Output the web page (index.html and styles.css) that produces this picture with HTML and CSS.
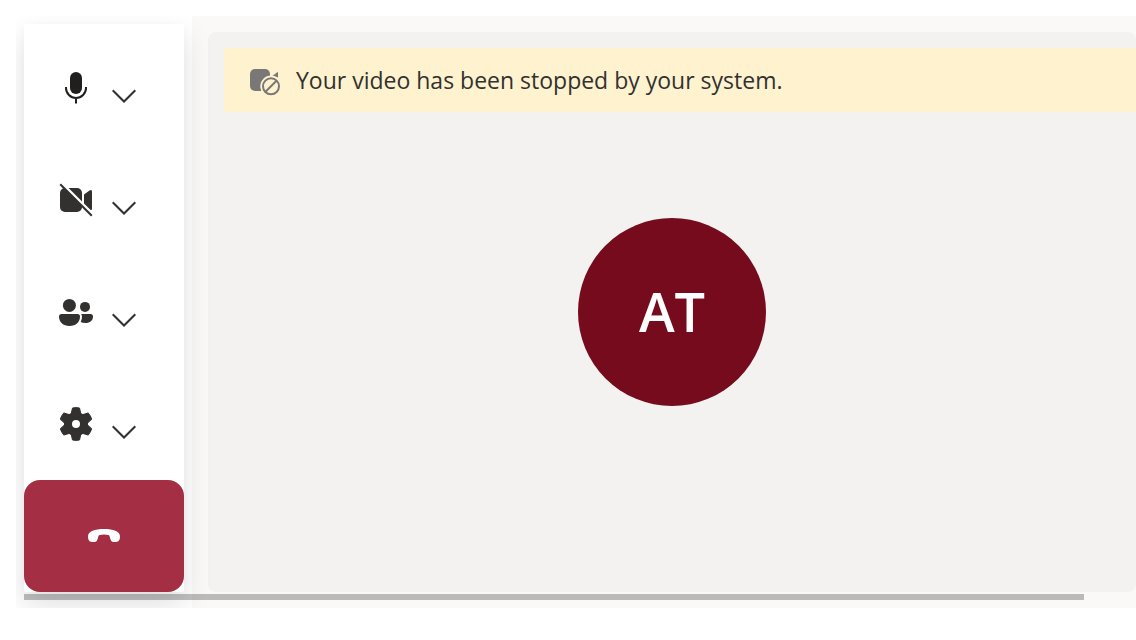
FILE: index.html
```html
<!DOCTYPE html>
<html lang="en">
<head>
<meta charset="utf-8">
<title>Call</title>
<link rel="stylesheet" href="styles.css">
</head>
<body>
<main class="call">
  <div class="controls" role="toolbar" aria-label="Call controls">
    <div class="control">
      <button class="icon-button mic" aria-label="Mute microphone">
        <svg class="icon" viewBox="0 0 40 40"><rect x="14" y="4" width="12" height="22" rx="6"/><path class="line" d="M10 19v1a10 10 0 0 0 20 0v-1M20 30v5.5"/></svg>
      </button>
      <button class="more" aria-label="Microphone options"><svg class="chevron" viewBox="0 0 24 14"><path d="M0.7 1.2 12 12.5 23.3 1.2"/></svg></button>
    </div>
    <div class="control">
      <button class="icon-button" aria-label="Turn camera on">
        <svg class="icon" viewBox="0 0 40 40"><rect x="4" y="8" width="22" height="24" rx="5"/><path d="M28 14.5 33.5 10.6Q36 9 36 11.500V28.500Q36 31 33.500 29.400L28 25.500Z"/><path class="cut" d="M4.500 2 38.500 36"/><path class="line" d="M4.200 4.200 35.800 35.800"/></svg>
      </button>
      <button class="more" aria-label="Camera options"><svg class="chevron" viewBox="0 0 24 14"><path d="M0.7 1.2 12 12.5 23.3 1.2"/></svg></button>
    </div>
    <div class="control">
      <button class="icon-button" aria-label="People">
        <svg class="icon" viewBox="0 0 40 40"><circle cx="13.400" cy="13.400" r="6.500"/><circle cx="29" cy="14.900" r="5"/><path d="M5.500 22h16q2.500 0 2.500 2.500C24 30 20 34 13.500 34S3 30 3 24.500Q3 22 5.500 22Z"/><path d="M25 22h9.500q2.500 0 2.500 2.500C37 28.500 34 31 29.500 31q-3 0-4.800-1 1.300-2.500 1.300-5.500 0-1.500-1-2.500Z"/></svg>
      </button>
      <button class="more" aria-label="People options"><svg class="chevron" viewBox="0 0 24 14"><path d="M0.7 1.2 12 12.5 23.3 1.2"/></svg></button>
    </div>
    <div class="control">
      <button class="icon-button" aria-label="Settings">
        <svg class="icon" viewBox="0 0 40 40"><circle cx="20" cy="20" r="12"/><g class="teeth"><path id="tooth" d="M16.500 4Q20 3.200 23.500 4L25 10.500V29.500L23.500 36Q20 36.800 16.500 36L15 29.500V10.500Z"/><use href="#tooth" transform="rotate(60 20 20)"/><use href="#tooth" transform="rotate(120 20 20)"/></g><circle class="hole" cx="20" cy="20" r="4"/></svg>
      </button>
      <button class="more" aria-label="Settings options"><svg class="chevron" viewBox="0 0 24 14"><path d="M0.7 1.2 12 12.5 23.3 1.2"/></svg></button>
    </div>
    <button class="hang-up" aria-label="Leave call">
      <svg class="icon" viewBox="0 0 40 40"><path d="M4 20.500C4 15 11 13 20 13s16 2 16 7.500c0 3-1 5.300-4 5.500h-2.500c-2-.2-2.800-1.500-3.300-3.500-.5-2.300-.8-3.300-2-3.600q-4.200-1-8.400 0c-1.200.3-1.500 1.300-2 3.600-.5 2-1.300 3.300-3.300 3.500H8c-3-.2-4-2.500-4-5.500Z"/></svg>
    </button>
  </div>
  <section class="stage">
    <div class="tile">
      <div class="banner" role="status">
        <svg class="banner-icon" viewBox="0 0 32 32"><rect x="2" y="5" width="20" height="22" rx="5"/><path d="M24 12.200 30 7.800V13.500Z"/><circle class="halo" cx="23" cy="22.300" r="10.700"/><circle class="ring" cx="23" cy="22.300" r="8"/><path class="ring" d="M17.500 27.800 28.500 16.800"/></svg>
        <span class="message">Your video has been stopped by your system.</span>
      </div>
      <div class="avatar">AT</div>
    </div>
  </section>
  <div class="scroll-thumb"></div>
</main>
</body>
</html>
```
FILE: styles.css
```css
body {
  margin: 16px 0 0 16px;
  background: #fff;
  font-family: "Open Sans", "Noto Sans", sans-serif;
  color: #323130;
}

button {
  padding: 0;
  border: 0;
  background: none;
  color: inherit;
  cursor: pointer;
}

svg {
  display: block;
}

.call {
  position: relative;
  display: flex;
  gap: 8px;
  overflow: hidden;
}

.controls {
  position: relative;
  z-index: 1;
  flex: none;
  width: 160px;
  box-sizing: border-box;
  margin: 8px 0 16px 8px;
  padding-top: 8px;
  background: #fff;
  box-shadow: 0 12px 28px rgba(0, 0, 0, 0.13), 0 2px 8px rgba(0, 0, 0, 0.02);
}

.control {
  display: flex;
  align-items: center;
  gap: 16px;
  height: 112px;
  padding-left: 32px;
}

.icon {
  width: 40px;
  height: 40px;
  fill: currentColor;
}

.mic {
  color: #201f1e;
}

.line {
  fill: none;
  stroke: currentColor;
  stroke-width: 2;
}

.cut {
  stroke: #fff;
  stroke-width: 3;
}

.teeth {
  stroke: currentColor;
  stroke-width: 1;
  stroke-linejoin: round;
}

.hole {
  fill: #fff;
}

.more {
  padding-top: 15px;
}

.chevron {
  width: 24px;
  height: 14px;
  fill: none;
  stroke: currentColor;
  stroke-width: 2;
}

.hang-up {
  display: flex;
  align-items: center;
  justify-content: center;
  width: 100%;
  height: 112px;
  border-radius: 16px;
  background: #a42e43;
  color: #fff;
}

.stage {
  display: flex;
  flex: 1;
  padding: 16px 0 16px 16px;
  background: #faf9f8;
}

.tile {
  display: grid;
  grid-template: 1fr / 1fr;
  flex: 1;
  border-radius: 8px;
  background: #f3f2f1;
}

.banner,
.avatar {
  grid-area: 1 / 1;
}

.banner {
  display: flex;
  align-items: center;
  align-self: start;
  gap: 16px;
  height: 64px;
  margin: 16px 0 0 16px;
  padding-left: 24px;
  background: #fff3cf;
}

.banner-icon {
  width: 32px;
  height: 32px;
  fill: #7a7876;
}

.banner-icon .halo {
  fill: #fff3cf;
}

.banner-icon .ring {
  fill: none;
  stroke: #7a7876;
  stroke-width: 2;
}

.message {
  font-size: 23px;
  line-height: 32px;
}

.avatar {
  display: flex;
  align-items: center;
  justify-content: center;
  place-self: center;
  box-sizing: border-box;
  width: 188px;
  height: 188px;
  padding-bottom: 2px;
  border-radius: 50%;
  background: #750b1c;
  color: #fff;
  font-size: 54px;
  font-weight: 600;
}

.scroll-thumb {
  position: absolute;
  z-index: 2;
  left: 8px;
  right: 52px;
  bottom: 8px;
  height: 6px;
  background: rgba(0, 0, 0, 0.25);
}
```
